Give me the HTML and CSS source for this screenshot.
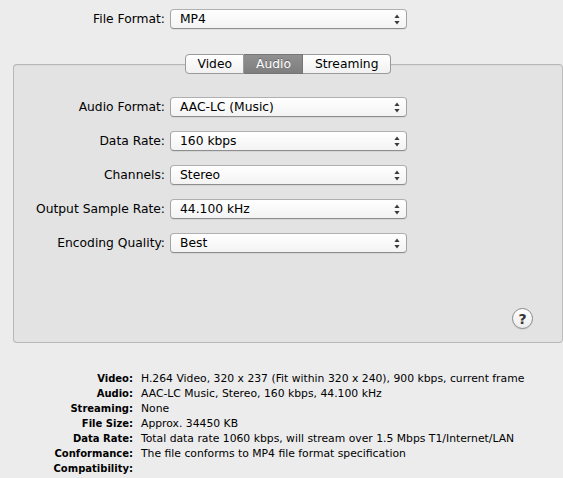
FILE: index.html
```html
<!DOCTYPE html>
<html>
<head>
<meta charset="utf-8">
<link rel="stylesheet" href="styles.css">
</head>
<body>
<div class="top-row">
  <span class="lbl">File Format:</span>
  <div class="popup"><span>MP4</span><svg class="arrows" width="6" height="11" viewBox="0 0 6 11"><path d="M3 0.5 L5.6 4 L0.4 4 Z M0.4 7 L5.6 7 L3 10.5 Z" fill="#3a3a3a"/></svg></div>
</div>
<div class="panel">
  <div class="tabs">
    <div class="tab">Video</div>
    <div class="tab sel">Audio</div>
    <div class="tab">Streaming</div>
  </div>
  <div class="form">
    <span class="lbl">Audio Format:</span>
    <div class="popup"><span>AAC-LC (Music)</span><svg class="arrows" width="6" height="11" viewBox="0 0 6 11"><path d="M3 0.5 L5.6 4 L0.4 4 Z M0.4 7 L5.6 7 L3 10.5 Z" fill="#3a3a3a"/></svg></div>
    <span class="lbl">Data Rate:</span>
    <div class="popup"><span>160 kbps</span><svg class="arrows" width="6" height="11" viewBox="0 0 6 11"><path d="M3 0.5 L5.6 4 L0.4 4 Z M0.4 7 L5.6 7 L3 10.5 Z" fill="#3a3a3a"/></svg></div>
    <span class="lbl">Channels:</span>
    <div class="popup"><span>Stereo</span><svg class="arrows" width="6" height="11" viewBox="0 0 6 11"><path d="M3 0.5 L5.6 4 L0.4 4 Z M0.4 7 L5.6 7 L3 10.5 Z" fill="#3a3a3a"/></svg></div>
    <span class="lbl">Output Sample Rate:</span>
    <div class="popup"><span>44.100 kHz</span><svg class="arrows" width="6" height="11" viewBox="0 0 6 11"><path d="M3 0.5 L5.6 4 L0.4 4 Z M0.4 7 L5.6 7 L3 10.5 Z" fill="#3a3a3a"/></svg></div>
    <span class="lbl">Encoding Quality:</span>
    <div class="popup"><span>Best</span><svg class="arrows" width="6" height="11" viewBox="0 0 6 11"><path d="M3 0.5 L5.6 4 L0.4 4 Z M0.4 7 L5.6 7 L3 10.5 Z" fill="#3a3a3a"/></svg></div>
  </div>
  <div class="help-row"><div class="help">?</div></div>
</div>
<div class="info">
  <span class="ik">Video:</span><span class="iv">H.264 Video, 320 x 237 (Fit within 320 x 240), 900 kbps, current frame</span>
  <span class="ik">Audio:</span><span class="iv">AAC-LC Music, Stereo, 160 kbps, 44.100 kHz</span>
  <span class="ik">Streaming:</span><span class="iv">None</span>
  <span class="ik">File Size:</span><span class="iv">Approx. 34450 KB</span>
  <span class="ik">Data Rate:</span><span class="iv">Total data rate 1060 kbps, will stream over 1.5 Mbps T1/Internet/LAN</span>
  <span class="ik">Conformance:</span><span class="iv">The file conforms to MP4 file format specification</span>
  <span class="ik">Compatibility:</span><span class="iv"></span>
</div>
</body>
</html>
```

FILE: styles.css
```css
html, body {
  margin: 0;
  padding: 0;
}
body {
  background: #ececec;
  font-family: "DejaVu Sans", "Liberation Sans", sans-serif;
  font-size: 12.3px;
  color: #000;
  width: 563px;
  height: 478px;
  overflow: hidden;
}
.top-row {
  display: grid;
  grid-template-columns: 165px 237px;
  column-gap: 5px;
  align-items: center;
  padding-top: 9px;
}
.lbl {
  text-align: right;
  white-space: nowrap;
}
.popup {
  box-sizing: border-box;
  height: 20px;
  display: flex;
  align-items: center;
  justify-content: space-between;
  padding: 0 6px 0 9px;
  background: linear-gradient(#ffffff, #f3f3f3);
  border: 1px solid #a3a3a3;
  border-top-color: #b0b0b0;
  border-bottom-color: #8e8e8e;
  border-radius: 4px;
  box-shadow: 0 1px 0 rgba(0, 0, 0, 0.06);
}
.arrows {
  display: block;
}
.panel {
  margin: 35px 0 0 13px;
  border: 1px solid #b8b8b8;
  border-right-color: #bdbdbd;
  border-radius: 4px;
  background: #e3e3e3;
  padding: 0 29px 13px 0;
  box-shadow: inset 0 1px 0 #dadada;
}
.tabs {
  display: flex;
  justify-content: center;
  margin: -11px -29px 0 0;
}
.tab {
  box-sizing: border-box;
  height: 20px;
  line-height: 18px;
  padding: 0 11.5px;
  background: linear-gradient(#ffffff, #f1f1f1);
  border: 1px solid #9a9a9a;
  border-left: none;
  white-space: nowrap;
}
.tab:first-child {
  border-left: 1px solid #9a9a9a;
  border-radius: 4px 0 0 4px;
}
.tab:last-child {
  border-radius: 0 4px 4px 0;
}
.tab.sel {
  background: linear-gradient(#909090, #7e7e7e);
  border-color: #767676;
  color: #fff;
  text-shadow: 0 -1px 0 rgba(0, 0, 0, 0.3);
}
.form {
  display: grid;
  grid-template-columns: 151px 237px;
  column-gap: 5px;
  row-gap: 14px;
  align-items: center;
  margin-top: 23px;
}
.help-row {
  display: flex;
  justify-content: flex-end;
  margin-top: 55px;
}
.help {
  box-sizing: border-box;
  width: 21px;
  height: 21px;
  border-radius: 50%;
  border: 1px solid #8a8a8a;
  background: linear-gradient(#ffffff, #ececec);
  box-shadow: 0 1px 0 rgba(0, 0, 0, 0.08);
  display: flex;
  align-items: center;
  justify-content: center;
  font-size: 14px;
  font-weight: bold;
  color: #333;
}
.info {
  display: grid;
  grid-template-columns: 133px auto;
  column-gap: 8px;
  margin-top: 28px;
  font-size: 10.8px;
  line-height: 15px;
}
.ik {
  font-weight: bold;
  font-size: 10px;
  text-align: right;
  white-space: nowrap;
}
.iv {
  white-space: nowrap;
}
```
